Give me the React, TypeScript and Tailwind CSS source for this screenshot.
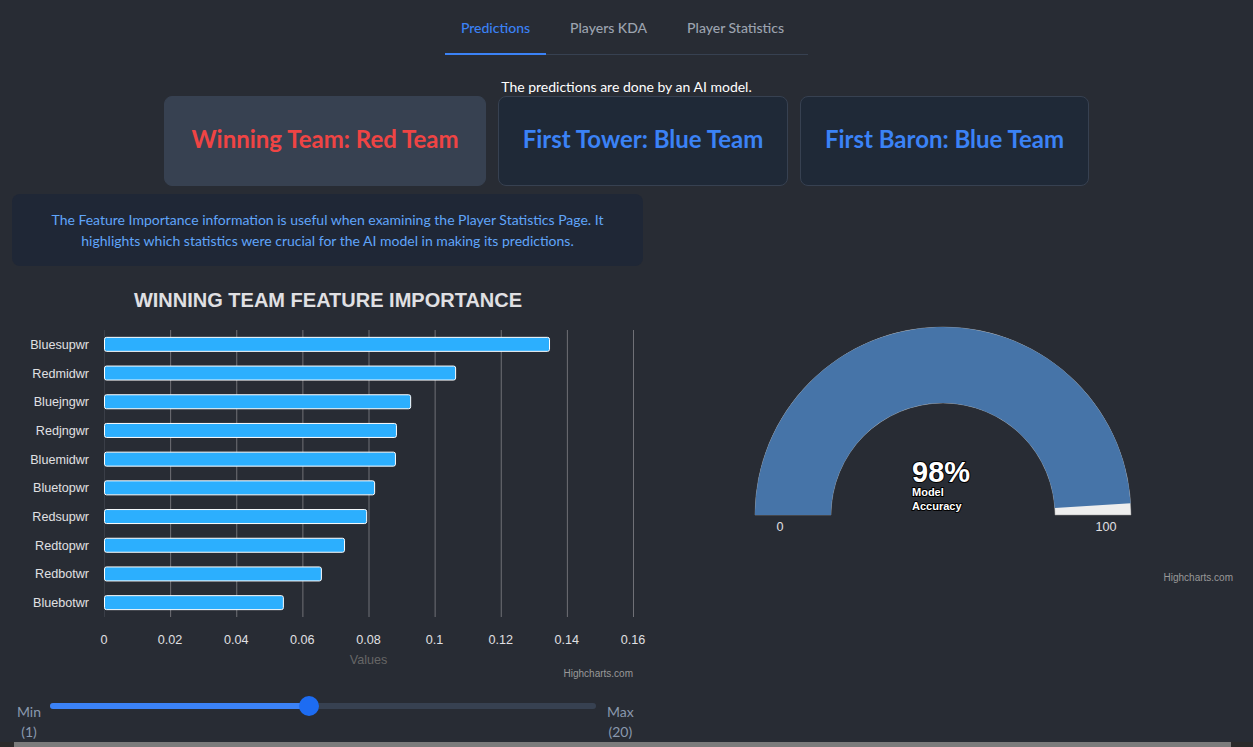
import { useState } from 'react';

const features: [string, number][] = [
  ['Bluesupwr', 0.1346],
  ['Redmidwr', 0.1062],
  ['Bluejngwr', 0.0926],
  ['Redjngwr', 0.0883],
  ['Bluemidwr', 0.088],
  ['Bluetopwr', 0.0817],
  ['Redsupwr', 0.0793],
  ['Redtopwr', 0.0726],
  ['Redbotwr', 0.0656],
  ['Bluebotwr', 0.0541],
];

const chartFont = { fontFamily: '"Liberation Sans", Arial, sans-serif' };

function FeatureChart() {
  // plot area in svg coords
  const left = 104;
  const right = 633;
  const top = 64;
  const bottom = 351;
  const max = 0.16;
  const rowH = (bottom - top) / features.length;
  const ticks = [0, 0.02, 0.04, 0.06, 0.08, 0.1, 0.12, 0.14, 0.16];
  const xOf = (v: number) => left + (v / max) * (right - left);

  return (
    <svg width={643} height={424} style={{ ...chartFont, overflow: 'visible' }}>
      <text x={328} y={41} textAnchor="middle" fontSize={20} fontWeight="bold" fill="#e0e0e3">
        WINNING TEAM FEATURE IMPORTANCE
      </text>
      {ticks.map((t, i) => (
        <line
          key={t}
          x1={xOf(t) + 0.5}
          x2={xOf(t) + 0.5}
          y1={top}
          y2={bottom}
          stroke={i === 0 ? '#3a3e47' : '#6f7076'}
          strokeWidth={1}
        />
      ))}
      {features.map(([name, v], i) => {
        const cy = top + rowH * (i + 0.5);
        return (
          <g key={name}>
            <text x={89} y={cy + 4.5} textAnchor="end" fontSize={12.6} fill="#e0e0e3">
              {name}
            </text>
            <rect x={left + 0.5} y={cy - 7} width={xOf(v) - left} height={14} rx={2} fill="#2caffe" stroke="#ffffff" strokeWidth={1} />
          </g>
        );
      })}
      {ticks.map((t) => (
        <text key={t} x={xOf(t)} y={378} textAnchor="middle" fontSize={12.6} fill="#e0e0e3">
          {t}
        </text>
      ))}
      <text x={(left + right) / 2} y={398} textAnchor="middle" fontSize={12.6} fill="#666666">
        Values
      </text>
      <text x={633} y={411} textAnchor="end" fontSize={10} fill="#999999">
        Highcharts.com
      </text>
    </svg>
  );
}

function Gauge({ value }: { value: number }) {
  const cx = 300;
  const cy = 241;
  const ro = 188;
  const ri = 112;
  const a = Math.PI * (1 - value / 100);
  const xo = cx + ro * Math.cos(a);
  const yo = cy - ro * Math.sin(a);
  const xi = cx + ri * Math.cos(a);
  const yi = cy - ri * Math.sin(a);
  const bg = `M ${cx - ro} ${cy} A ${ro} ${ro} 0 0 1 ${cx + ro} ${cy} L ${cx + ri} ${cy} A ${ri} ${ri} 0 0 0 ${cx - ri} ${cy} Z`;
  const fg = `M ${cx - ro} ${cy} A ${ro} ${ro} 0 0 1 ${xo} ${yo} L ${xi} ${yi} A ${ri} ${ri} 0 0 0 ${cx - ri} ${cy} Z`;

  return (
    <svg width={600} height={320} style={chartFont}>
      <path d={bg} fill="#eeeeee" stroke="#999999" strokeWidth={0.5} />
      <path d={fg} fill="#4674a8" />
      <text x={137} y={257} textAnchor="middle" fontSize={12.6} fill="#e0e0e3">0</text>
      <text x={463} y={257} textAnchor="middle" fontSize={12.6} fill="#e0e0e3">100</text>
      <g fill="#ffffff" stroke="#000000" strokeWidth={2} strokeLinejoin="round" style={{ paintOrder: 'stroke' }} fontWeight="bold">
        <text x={269} y={208} fontSize={29}>{value}%</text>
        <text x={269} y={222} fontSize={11}>Model</text>
        <text x={269} y={236} fontSize={11}>Accuracy</text>
      </g>
      <text x={590} y={307} textAnchor="end" fontSize={10} fill="#999999">
        Highcharts.com
      </text>
    </svg>
  );
}

function RangeSlider() {
  const [value] = useState(10);
  const pct = ((value - 1) / 19) * 100;
  return (
    <div className="mt-[6px] flex items-start text-[14px] leading-5 text-[#8a99ae]">
      <div className="w-[50px] pl-[8px] flex flex-col items-center pt-[6px]">
        <span>Min</span>
        <span>(1)</span>
      </div>
      <div className="relative w-[546px] h-[6px] mt-[7px] rounded-full bg-[#374151]">
        <div className="h-full rounded-full bg-[#3b82f6]" style={{ width: `${pct}%` }} />
        <div
          className="absolute top-1/2 w-5 h-5 -translate-x-1/2 -translate-y-1/2 rounded-full bg-[#1d6cf2]"
          style={{ left: `${pct}%` }}
        />
      </div>
      <div className="ml-[11px] flex flex-col items-center pt-[6px]">
        <span>Max</span>
        <span>(20)</span>
      </div>
    </div>
  );
}

export default function App() {
  const tabs = ['Predictions', 'Players KDA', 'Player Statistics'];
  return (
    <div
      className="relative w-full h-[747px] overflow-hidden bg-[#282c34] text-white"
      style={{ fontFamily: 'Lato, "Open Sans", sans-serif' }}
    >
      <div className="flex justify-center pt-px">
        <div className="border-b border-[#374151]">
          <ul className="flex -mb-px text-sm font-medium text-center">
            {tabs.map((t, i) => (
              <li key={t} className="me-2">
                <span
                  className={
                    i === 0
                      ? 'inline-block px-4 pt-[17px] pb-[15px] border-b-2 border-[#3b82f6] text-[#3b82f6]'
                      : 'inline-block px-4 pt-[17px] pb-[15px] border-b-2 border-transparent text-[#9ca3af]'
                  }
                >
                  {t}
                </span>
              </li>
            ))}
          </ul>
        </div>
      </div>

      <p className="mt-5 pt-[3px] pb-px text-center text-sm leading-[17px]">The predictions are done by an AI model.</p>

      <div className="flex justify-center gap-3">
        <div className="w-[322px] h-[90px] flex items-center justify-center rounded-lg border border-[#374151] bg-[#374151]">
          <span className="pb-1 text-2xl font-bold text-[#ef4444]">Winning Team: Red Team</span>
        </div>
        <div className="w-[290px] h-[90px] flex items-center justify-center rounded-lg border border-[#374151] bg-[#1f2937]">
          <span className="pb-1 text-2xl font-bold text-[#3b82f6]">First Tower: Blue Team</span>
        </div>
        <div className="w-[289px] h-[90px] flex items-center justify-center rounded-lg border border-[#374151] bg-[#1f2937]">
          <span className="pb-1 text-2xl font-bold text-[#3b82f6]">First Baron: Blue Team</span>
        </div>
      </div>

      <div className="flex mt-2">
        <div className="w-[643px] shrink-0">
          <div className="ml-3 h-[72px] flex items-center justify-center px-8 rounded-lg bg-[#1f2736] text-center text-sm leading-[21px] text-[#60a5fa]">
            The Feature Importance information is useful when examining the Player Statistics Page. It highlights which statistics were crucial for the AI model in making its predictions.
          </div>
          <FeatureChart />
          <RangeSlider />
        </div>
        <div className="pt-[80px]">
          <Gauge value={98} />
        </div>
      </div>

      <div className="fixed bottom-0 inset-x-0 h-[5px] bg-[#2b2b2b] flex">
        <div className="ml-[14px] mr-[22px] flex-1 bg-[#7b7b7b]" />
      </div>
    </div>
  );
}
